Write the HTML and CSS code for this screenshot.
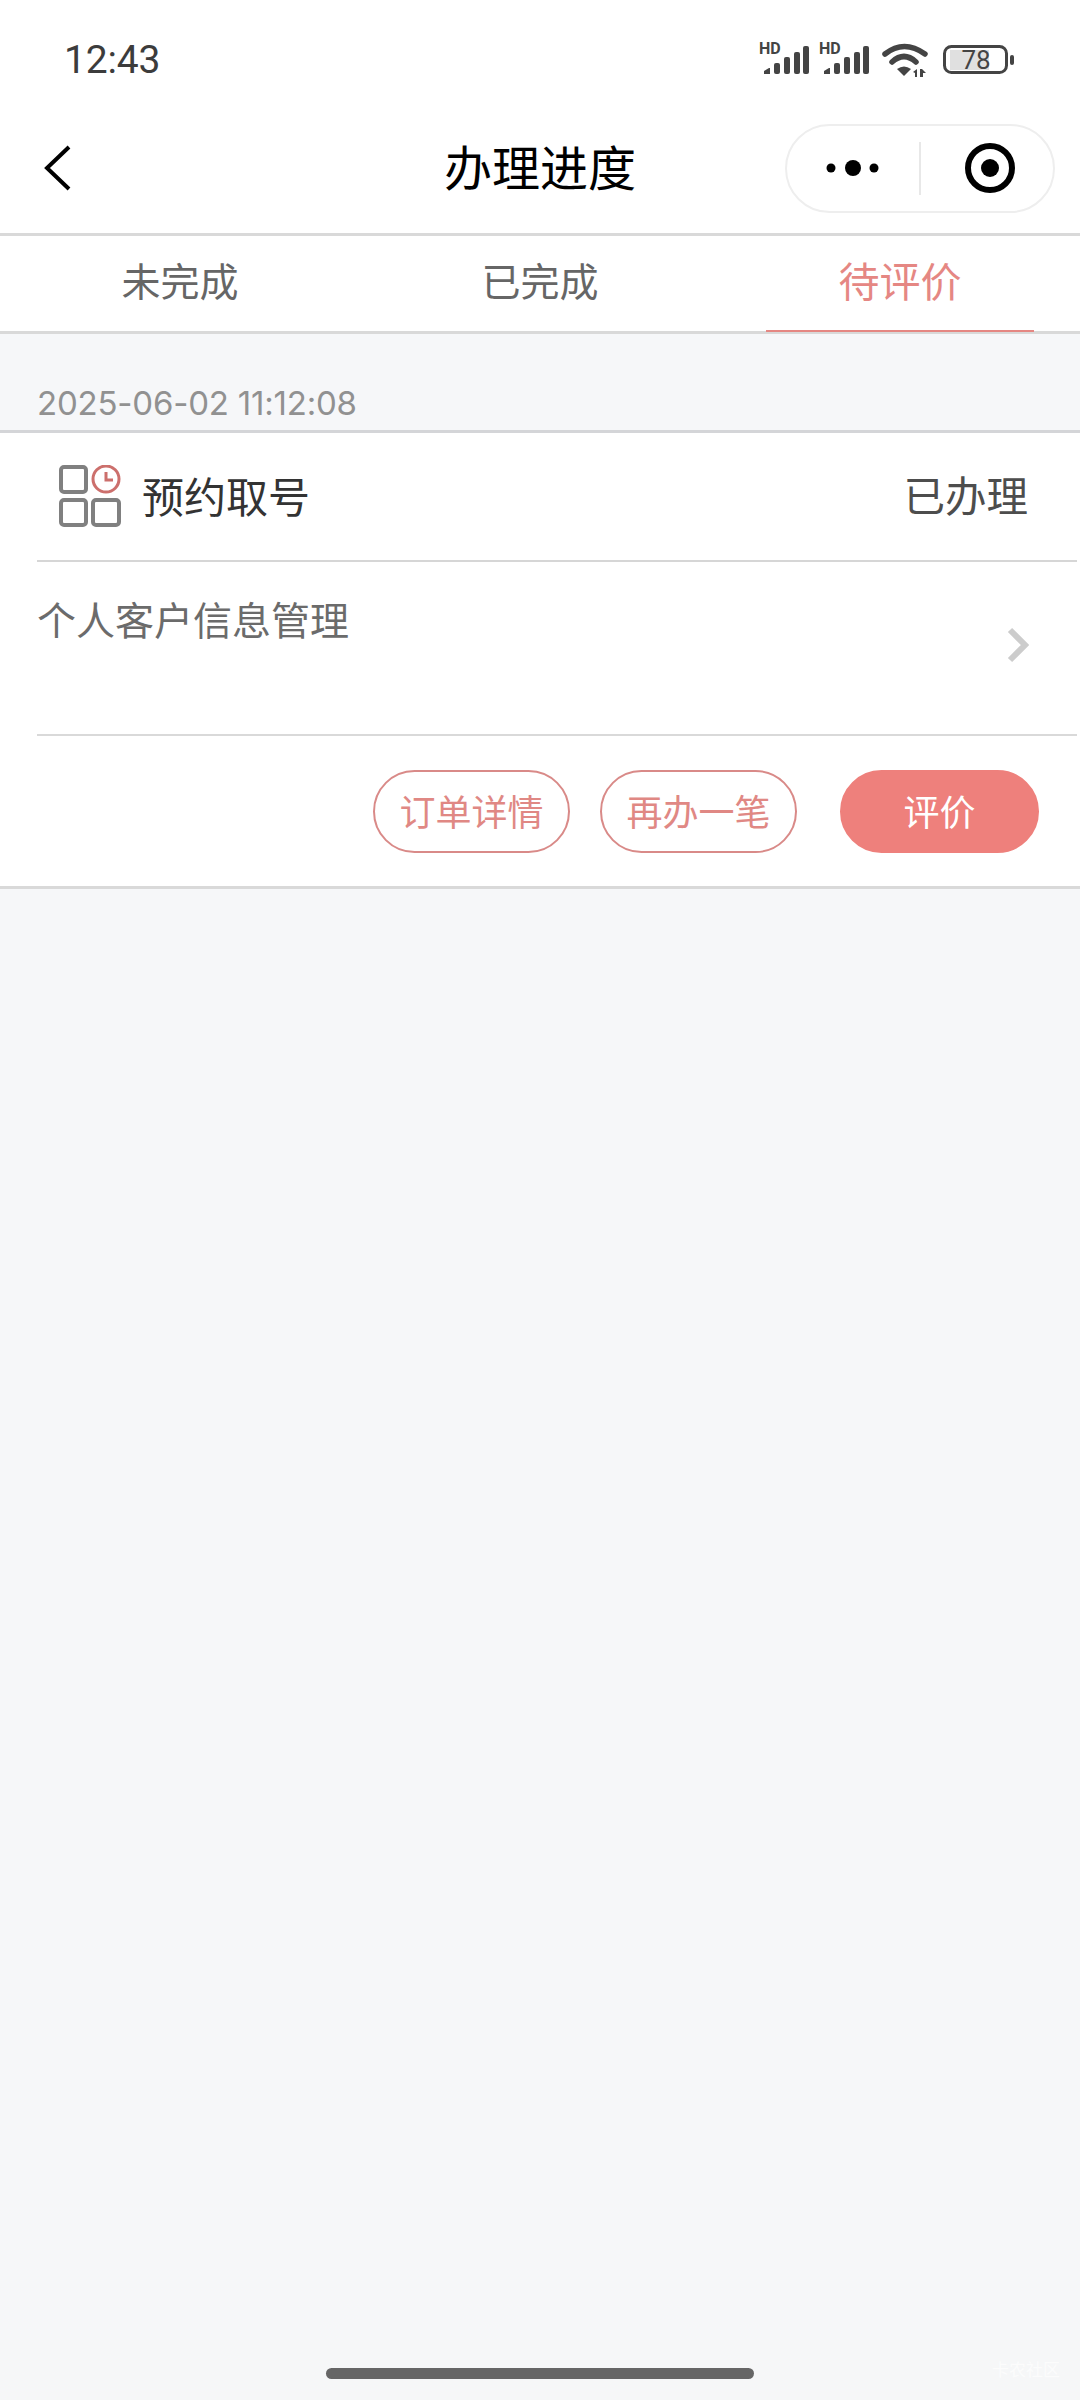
FILE: index.html
```html
<!DOCTYPE html>
<html lang="zh">
<head>
<meta charset="utf-8">
<title>办理进度</title>
<link rel="stylesheet" href="styles.css">
</head>
<body>
<div class="page">
  <header class="header">
    <div class="statusbar">
      <span class="time">12:43</span>
      <div class="status-icons">
        <svg class="signal" viewBox="0 0 50 34"><text class="hd" x="0" y="11">HD</text><path d="M5 31v-3l5-3h1v6z" /><rect x="15" y="20" width="6" height="11" rx="2"/><rect x="25" y="14" width="6" height="17" rx="2"/><rect x="35" y="9" width="6" height="22" rx="2"/><rect x="44" y="3" width="6" height="28" rx="2"/></svg>
        <svg class="signal" viewBox="0 0 50 34"><text class="hd" x="0" y="11">HD</text><path d="M5 31v-3l5-3h1v6z" /><rect x="15" y="20" width="6" height="11" rx="2"/><rect x="25" y="14" width="6" height="17" rx="2"/><rect x="35" y="9" width="6" height="22" rx="2"/><rect x="44" y="3" width="6" height="28" rx="2"/></svg>
        <svg class="wifi" viewBox="0 0 46 34"><path class="arc" d="M3 11Q22-4 43 11"/><path class="arc" d="M10 19Q22 8 34 19"/><path class="solid" d="M15 26Q22 21 29 26L22 33Z"/><path class="solid" d="M31 29l4-3v8h-2v-4zM38 26h2l4 4h-3v4h-3z"/></svg>
        <svg class="battery" viewBox="0 0 72 30"><rect class="batt-fill" x="7" y="5" width="39" height="20"/><rect class="batt-case" x="1.5" y="1.5" width="62" height="26" rx="7"/><rect class="batt-tip" x="67" y="10" width="4" height="10" rx="2"/><text class="batt-text" x="33" y="24">78</text></svg>
      </div>
    </div>
    <nav class="navbar">
      <svg class="back" viewBox="0 0 28 46"><path d="M25 2L3 23l22 21"/></svg>
      <h1 class="title">办理进度</h1>
      <div class="capsule">
        <div class="capsule-part">
          <svg class="dots" viewBox="0 0 54 20"><circle cx="5" cy="10" r="4.5"/><circle cx="27" cy="10" r="8"/><circle cx="48" cy="10" r="4.5"/></svg>
        </div>
        <div class="capsule-divider"></div>
        <div class="capsule-part">
          <svg class="target" viewBox="0 0 50 50"><circle class="ring" cx="25" cy="25" r="22"/><circle cx="25" cy="25" r="9"/></svg>
        </div>
      </div>
    </nav>
  </header>

  <div class="tabs">
    <div class="tab">未完成</div>
    <div class="tab">已完成</div>
    <div class="tab tab-active"><span class="tab-label">待评价</span></div>
  </div>

  <main class="content">
    <div class="date">2025-06-02 11:12:08</div>
    <section class="card">
      <div class="card-head">
        <div class="card-name">
          <svg class="biz-icon" viewBox="0 0 62 62">
            <rect class="sq" x="2" y="2" width="25" height="25" rx="3"/>
            <rect class="sq" x="2" y="35" width="25" height="25" rx="3"/>
            <rect class="sq" x="34" y="35" width="26" height="25" rx="3"/>
            <circle class="clock" cx="47" cy="14" r="13"/>
            <path class="clock" d="M47 7v8h7"/>
          </svg>
          <span class="biz-name">预约取号</span>
        </div>
        <span class="biz-status">已办理</span>
      </div>
      <div class="card-body">
        <span class="service">个人客户信息管理</span>
        <svg class="chevron" viewBox="0 0 22 36"><path d="M3 3l15 15L3 33"/></svg>
      </div>
      <div class="card-actions">
        <button class="btn">订单详情</button>
        <button class="btn">再办一笔</button>
        <button class="btn btn-fill">评价</button>
      </div>
    </section>
  </main>

  <footer class="homebar-wrap">
    <div class="homebar"></div>
    <span class="watermark">卡农社区</span>
  </footer>
</div>
</body>
</html>
```

FILE: styles.css
```css
* { box-sizing: border-box; }

html, body {
  margin: 0;
  padding: 0;
  background: #f6f7f9;
}

body {
  font-family: "Noto Sans CJK SC", "Noto Sans", sans-serif;
}

.page {
  width: 1080px;
  height: 2400px;
  display: flex;
  flex-direction: column;
  overflow: hidden;
}

.header {
  background: #fff;
  border-bottom: 3px solid #d9d9d9;
}

.statusbar {
  height: 120px;
  display: flex;
  justify-content: space-between;
  align-items: center;
  padding: 0 65px 0 64px;
}

.time {
  font-family: Roboto, sans-serif;
  font-size: 39px;
  font-weight: 400;
  color: #3c3c3c;
  letter-spacing: -0.2px;
}

.status-icons {
  display: flex;
  align-items: center;
}

.signal {
  width: 50px;
  height: 34px;
  margin-right: 10px;
  fill: #444;
  overflow: visible;
}

.signal + .wifi { margin-left: 3px; }

.hd {
  font-family: Roboto, sans-serif;
  font-size: 16px;
  font-weight: 700;
  fill: #444;
}

.wifi {
  width: 46px;
  height: 34px;
  margin-right: 15px;
}

.arc {
  fill: none;
  stroke: #444;
  stroke-width: 5.5;
  stroke-linecap: round;
}

.solid { fill: #444; }

.battery {
  width: 72px;
  height: 30px;
}

.batt-fill { fill: #e0e0e0; }

.batt-case {
  fill: none;
  stroke: #444;
  stroke-width: 3;
}

.batt-tip { fill: #444; }

.batt-text {
  font-family: Roboto, sans-serif;
  font-size: 26px;
  fill: #444;
  text-anchor: middle;
}

.navbar {
  height: 113px;
  padding-bottom: 17px;
  display: grid;
  grid-template-columns: 1fr auto 1fr;
  align-items: center;
}

.back {
  width: 28px;
  height: 46px;
  margin-left: 44px;
  fill: none;
  stroke: #000;
  stroke-width: 4;
}

.title {
  margin: 0 0 6px;
  font-size: 48px;
  font-weight: 400;
  line-height: 60px;
  color: #000;
}

.capsule {
  justify-self: end;
  width: 270px;
  height: 89px;
  margin-right: 25px;
  border: 2px solid #eee;
  border-radius: 45px;
  display: flex;
  align-items: center;
}

.capsule-part {
  flex: 1;
  display: flex;
  justify-content: center;
  align-items: center;
}

.capsule-divider {
  width: 2px;
  height: 53px;
  background: #e8e8e8;
}

.dots {
  width: 54px;
  height: 20px;
  fill: #000;
}

.target {
  width: 50px;
  height: 50px;
  margin-left: 6px;
  fill: #000;
}

.ring {
  fill: none;
  stroke: #000;
  stroke-width: 6;
}

.tabs {
  height: 98px;
  display: flex;
  background: #fff;
  border-bottom: 3px solid #d9d9d9;
}

.tab {
  flex: 1;
  display: flex;
  justify-content: center;
  align-items: center;
  padding-bottom: 10px;
  font-size: 39px;
  color: #666;
}

.tab-active {
  position: relative;
  color: #e58783;
  font-size: 41px;
}

.tab-active::after {
  content: "";
  position: absolute;
  left: 46px;
  right: 46px;
  bottom: -1px;
  height: 2px;
  background: #e58783;
}

.content {
  flex: 1;
}

.date {
  height: 96px;
  padding: 49px 0 0 37px;
  font-family: Inter, sans-serif;
  font-size: 33px;
  line-height: 40px;
  letter-spacing: -0.2px;
  color: #919191;
  white-space: nowrap;
}

.card {
  background: #fff;
  border-top: 3px solid #d4d5d8;
  border-bottom: 3px solid #d9d9d9;
}

.card-head {
  height: 127px;
  padding: 0 52px 0 59px;
  display: flex;
  justify-content: space-between;
  align-items: center;
}

.card-name {
  display: flex;
  align-items: center;
}

.biz-icon {
  width: 62px;
  height: 62px;
  margin: 0 21px 2px 0;
}

.sq {
  fill: none;
  stroke: #808080;
  stroke-width: 4;
}

.clock {
  fill: none;
  stroke: #cc6f6c;
  stroke-width: 3;
}

.biz-name {
  font-size: 42px;
  padding-bottom: 5px;
  color: #333;
}

.biz-status {
  font-size: 41.5px;
  padding-bottom: 5px;
  color: #4d4d4d;
}

.card-body {
  height: 176px;
  margin: 0 3px 0 37px;
  padding: 18px 48px 0 0;
  border-top: 2px solid #d6d6d6;
  border-bottom: 2px solid #d9d9d9;
  display: flex;
  justify-content: space-between;
  align-items: flex-start;
}

.service {
  font-size: 39px;
  line-height: 76px;
  color: #6b6b6b;
}

.chevron {
  width: 22px;
  height: 36px;
  margin-top: 47px;
  fill: none;
  stroke: #ccc;
  stroke-width: 6;
}

.card-actions {
  height: 150px;
  padding: 34px 41px 0 0;
  display: flex;
  justify-content: flex-end;
  align-items: flex-start;
}

.btn {
  width: 197px;
  height: 83px;
  margin-left: 30px;
  padding: 0 0 4px;
  border: 2px solid #d98a88;
  border-radius: 42px;
  background: #fff;
  font-family: inherit;
  font-size: 36px;
  color: #e08884;
}

.btn-fill {
  width: 199px;
  margin-left: 43px;
  border-color: #ee807c;
  background: #ee807c;
  color: #fff;
}

.homebar-wrap {
  position: relative;
  height: 60px;
  background: #f6f7f8;
  padding-top: 28px;
}

.homebar {
  width: 428px;
  height: 11px;
  margin-left: 326px;
  border-radius: 6px;
  background: #666;
}

.watermark {
  position: absolute;
  left: 992px;
  top: 16px;
  font-size: 17px;
  color: #fff;
  opacity: 0.7;
}
```
